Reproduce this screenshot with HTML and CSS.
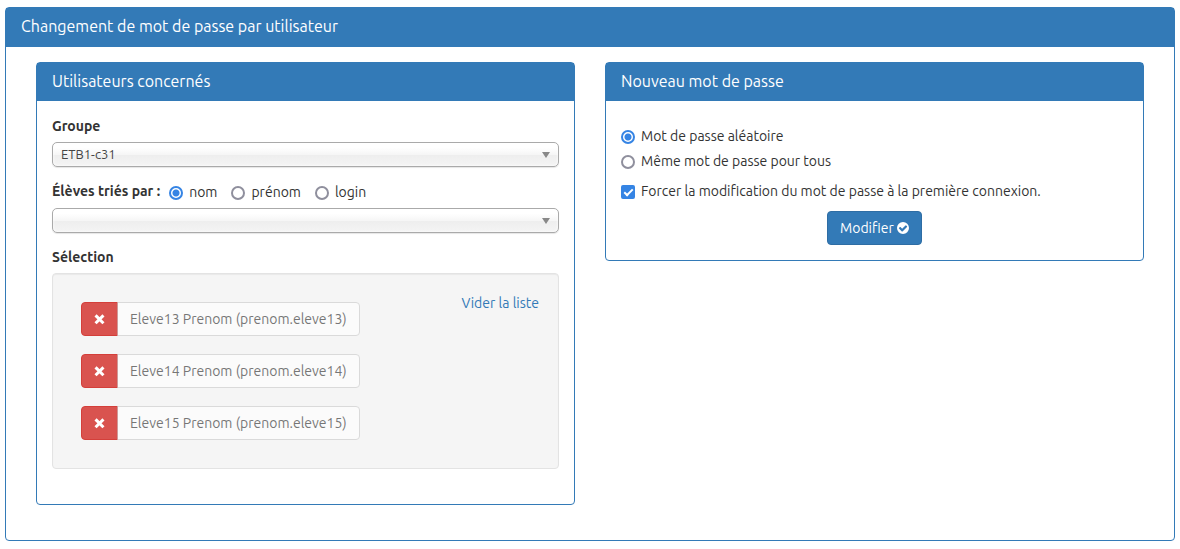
FILE: index.html
```html
<!DOCTYPE html>
<html lang="fr">
<head>
  <meta charset="UTF-8" />
  <meta name="viewport" content="width=device-width, initial-scale=1.0"/>
  <title>Changement de mot de passe</title>
  <link rel="stylesheet" href="styles.css">
</head>
<body>
  <!-- icons -->
  <svg class="sprite" aria-hidden="true">
    <symbol id="icon-remove" viewBox="0 0 11 12">
      <path d="M2.600 3.400L8.400 9.200M8.400 3.400L2.600 9.200" fill="none" stroke="currentColor" stroke-width="3" stroke-linecap="square"/>
    </symbol>
    <symbol id="icon-check" viewBox="0 0 12 12">
      <path fill="currentColor" fill-rule="evenodd" d="M6 0a6 6 0 1 0 0 12A6 6 0 0 0 6 0zM10 4.9L5.5 9.4a.5.5 0 0 1-.7 0L2 6.600a.5.5 0 0 1 0-.7l.8-.8a.5.5 0 0 1 .7 0l1.650 1.650L8.500 3.400a.5.5 0 0 1 .7 0l.8.8a.5.5 0 0 1 0 .7z"/>
    </symbol>
  </svg>

  <form class="panel">
    <h1 class="panel-heading main-heading">Changement de mot de passe par utilisateur</h1>
    <div class="panel-body columns">

      <section class="panel">
        <h2 class="panel-heading">Utilisateurs concernés</h2>
        <div class="panel-body">
          <div class="form-group">
            <label class="title" for="groupe">Groupe</label>
            <div class="select">
              <select id="groupe">
                <option>ETB1-c31</option>
              </select>
            </div>
          </div>

          <div class="form-group">
            <div class="sort">
              <label class="title" for="eleve">Élèves triés par :</label>
              <label class="choice"><input type="radio" name="tri" checked> nom</label>
              <label class="choice"><input type="radio" name="tri"> prénom</label>
              <label class="choice"><input type="radio" name="tri"> login</label>
            </div>
            <div class="select">
              <select id="eleve">
                <option></option>
              </select>
            </div>
          </div>

          <div class="title">Sélection</div>
          <div class="well">
            <ul class="users">
              <li class="user">
                <button type="button" class="btn btn-danger" aria-label="Retirer"><svg class="icon"><use href="#icon-remove"/></svg></button>
                <button type="button" class="btn btn-default" disabled>Eleve13 Prenom (prenom.eleve13)</button>
              </li>
              <li class="user">
                <button type="button" class="btn btn-danger" aria-label="Retirer"><svg class="icon"><use href="#icon-remove"/></svg></button>
                <button type="button" class="btn btn-default" disabled>Eleve14 Prenom (prenom.eleve14)</button>
              </li>
              <li class="user">
                <button type="button" class="btn btn-danger" aria-label="Retirer"><svg class="icon"><use href="#icon-remove"/></svg></button>
                <button type="button" class="btn btn-default" disabled>Eleve15 Prenom (prenom.eleve15)</button>
              </li>
            </ul>
            <a href="#">Vider la liste</a>
          </div>
        </div>
      </section>

      <section class="panel">
        <h2 class="panel-heading">Nouveau mot de passe</h2>
        <div class="panel-body password">
          <div class="modes">
            <label class="choice"><input type="radio" name="mode" checked> Mot de passe aléatoire</label>
            <label class="choice"><input type="radio" name="mode"> Même mot de passe pour tous</label>
          </div>
          <label class="choice"><input type="checkbox" checked> Forcer la modification du mot de passe à la première connexion.</label>
          <button type="button" class="btn btn-primary">Modifier <svg class="icon"><use href="#icon-check"/></svg></button>
        </div>
      </section>

    </div>
  </form>
</body>
</html>
```

FILE: styles.css
```css
* {
  box-sizing: border-box;
}

body {
  margin: 7px 5px;
  background-color: #fff;
  color: #333;
  font-family: Ubuntu, "Noto Sans", sans-serif;
  font-size: 14px;
  line-height: 20px;
}

button, select {
  font-family: inherit;
}

a {
  color: #337ab7;
  text-decoration: none;
}

.sprite {
  display: none;
}

/* panels */
.panel {
  border: 1px solid #337ab7;
  border-radius: 4px;
  background-color: #fff;
}

.panel-heading {
  margin: 0;
  padding: 9px 15px 11px;
  background-color: #337ab7;
  color: #fff;
  font-size: 16px;
  font-weight: normal;
  line-height: 18px;
}

.main-heading {
  border-bottom: 1px solid #337ab7;
}

.panel-body {
  padding: 15px;
}

.columns {
  display: grid;
  grid-template-columns: 1fr 1fr;
  align-items: start;
  gap: 30px;
  padding: 15px 30px 35px;
}

/* left form */
.form-group {
  margin-bottom: 14px;
}

.title {
  display: block;
  margin-bottom: 6px;
  font-weight: bold;
}

.sort {
  display: flex;
  gap: 14px;
  margin-bottom: 6px;
}

.sort .title {
  margin: 0 -5px 0 0;
}

.sort .choice {
  margin-top: 1px;
}

.select {
  position: relative;
}

.select select {
  display: block;
  width: 100%;
  height: 25px;
  padding: 0 8px 2px;
  border: 1px solid #aaa;
  border-radius: 5px;
  appearance: none;
  background: linear-gradient(#fff 20%, #f6f6f6 50%, #eee 52%, #f4f4f4 100%);
  box-shadow: 0 0 3px #fff inset, 0 1px 1px rgba(0,0,0,0.1);
  color: #444;
  font-size: 13px;
}

.select::after {
  content: "";
  position: absolute;
  top: 10px;
  right: 9px;
  border: 4px solid transparent;
  border-top: 6px solid #888;
  border-bottom: 0;
  pointer-events: none;
}

.well {
  display: flex;
  justify-content: space-between;
  align-items: flex-start;
  margin-bottom: 20px;
  padding: 19px;
  border: 1px solid #e3e3e3;
  border-radius: 4px;
  background-color: #f5f5f5;
  box-shadow: inset 0 1px 1px rgba(0,0,0,0.05);
}

.users {
  display: grid;
  gap: 18px;
  margin: 0;
  padding: 9px;
  list-style: none;
}

.user {
  display: flex;
}

/* buttons */
.btn {
  height: 34px;
  padding: 0 12px;
  border: 1px solid transparent;
  border-radius: 4px;
  cursor: pointer;
  font-size: 14px;
  line-height: 20px;
}

.btn-danger {
  border-color: #d43f3a;
  border-radius: 4px 0 0 4px;
  background-color: #d9534f;
  color: #fff;
}

.btn-default {
  margin-left: -1px;
  border-color: #ccc;
  border-radius: 0 4px 4px 0;
  background-color: #fff;
  color: #333;
  cursor: not-allowed;
  opacity: 0.65;
}

.btn-primary {
  align-self: center;
  border-color: #2e6da4;
  background-color: #337ab7;
  color: #fff;
}

.icon {
  width: 12px;
  height: 12px;
  vertical-align: -1px;
}

.btn-danger .icon {
  width: 11px;
}

/* radios and checkbox */
.choice {
  display: flex;
  align-items: center;
  gap: 6px;
}

.choice input {
  flex: none;
  width: 14px;
  height: 14px;
  margin: 2px 0 0;
  border: 2px solid #8f8f9d;
  border-radius: 50%;
  appearance: none;
  background-color: #fff;
}

.choice input:checked {
  border-color: #3584e4;
  background: radial-gradient(circle, #3584e4 3px, #fff 4px);
}

.choice input[type="checkbox"] {
  display: grid;
  place-items: center;
  border-radius: 2px;
}

.choice input[type="checkbox"]:checked {
  background: #3584e4;
}

.choice input[type="checkbox"]:checked::after {
  content: "";
  box-sizing: border-box;
  width: 9px;
  height: 5px;
  border: solid #fff;
  border-width: 0 0 2px 2px;
  transform: translateY(-1px) rotate(-45deg);
}

/* right form */
.password {
  display: flex;
  flex-direction: column;
  gap: 10px;
  padding-top: 25px;
}

.modes {
  display: grid;
  gap: 5px;
}
```
